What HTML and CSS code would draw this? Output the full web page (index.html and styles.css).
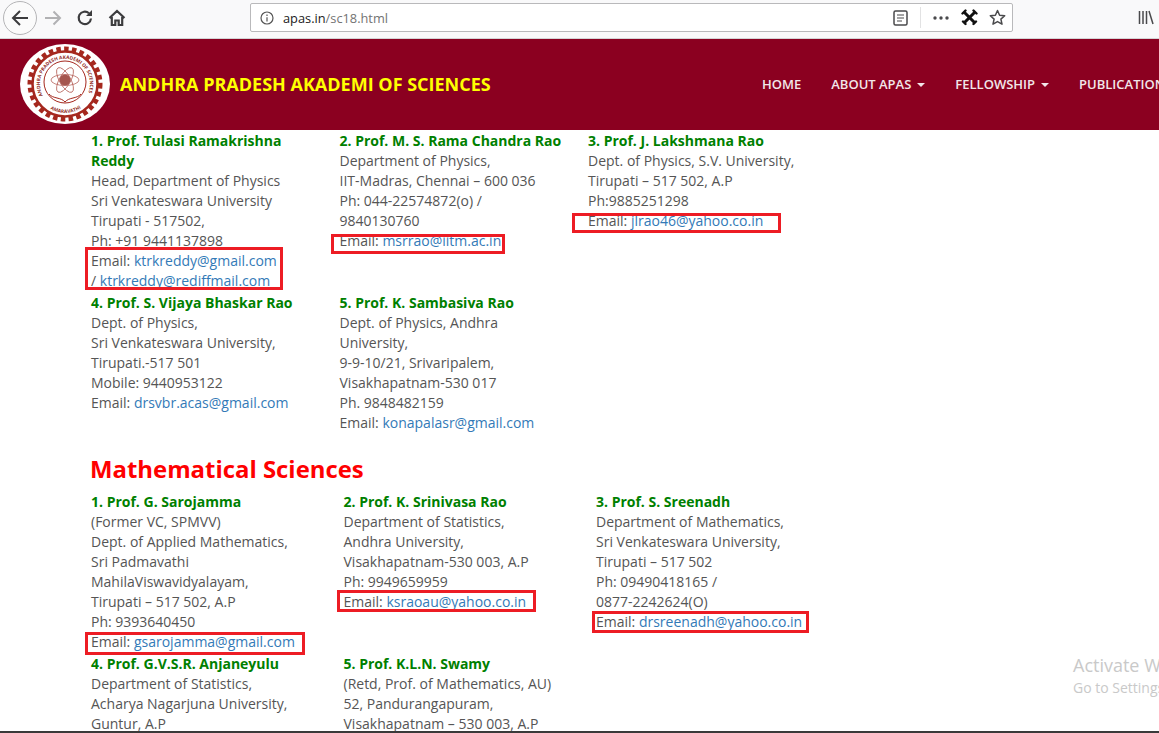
FILE: index.html
```html
<!DOCTYPE html>
<html lang="en">
<head>
<meta charset="utf-8">
<title>Andhra Pradesh Akademi of Sciences</title>
<link rel="stylesheet" href="styles.css">
</head>
<body>
<div class="screen">
  <div class="toolbar">
    <div class="tb-nav">
      <span class="back-btn">
        <svg width="20" height="20" viewBox="0 0 20 20" fill="none" stroke="#3c3c3e" stroke-width="2"><path d="M3 10H18M10 3L3 10L10 17"/></svg>
      </span>
      <svg class="forward" width="18" height="18" viewBox="0 0 18 18" fill="none" stroke="#b1b1b3" stroke-width="2"><path d="M1 9H16M9.500 2.500L16 9L9.500 15.500"/></svg>
      <svg class="reload" width="18" height="18" viewBox="0 0 18 18" fill="none" stroke="#3c3c3e" stroke-width="2.200"><path d="M15 9.500A6.200 6.200 0 1 1 13 4.300"/><path d="M16 1V7H10" fill="#3c3c3e" stroke="none"/></svg>
      <svg class="home" width="18" height="18" viewBox="0 0 18 18" fill="none" stroke="#3c3c3e" stroke-width="2.200"><path d="M1.500 9L9 2L16.500 9M3.800 8V16H7.300V11.500H10.700V16H14.200V8"/></svg>
    </div>
    <div class="urlbar">
      <svg class="info" width="14" height="14" viewBox="0 0 14 14" fill="none" stroke="#555" stroke-width="1.200"><circle cx="7" cy="7" r="6"/><path d="M7 6.200V10.500M7 3.500V5"/></svg>
      <span class="url"><span class="host">apas.in</span>/sc18.html</span>
      <svg class="reader" width="15" height="16" viewBox="0 0 15 16" fill="none" stroke="#4a4a4c" stroke-width="1.500"><rect x="1" y="1" width="13" height="14" rx="1.500"/><path d="M4 5H11M4 8H11M4 11H9" stroke-width="1.200"/></svg>
      <span class="sep"></span>
      <svg class="dots" width="16" height="4" viewBox="0 0 16 4" fill="#4a4a4c"><circle cx="2" cy="2" r="1.700"/><circle cx="8" cy="2" r="1.700"/><circle cx="14" cy="2" r="1.700"/></svg>
      <svg class="tools" width="17" height="17" viewBox="0 0 17 17" fill="none" stroke="#111" stroke-linecap="round"><path d="M4 4L13 13" stroke-width="3"/><path d="M13 4L4 13" stroke-width="3"/><path d="M1.500 4.500L4.500 1.500M12.500 1.500L15.500 4.500M2 12.500L4.500 15M12.500 15L15 12.500" stroke-width="2.400"/></svg>
      <svg class="star" width="17" height="17" viewBox="0 0 17 17" fill="none" stroke="#4a4a4c" stroke-width="1.500" stroke-linejoin="round"><path d="M8.500 1.500L10.600 6.200L15.700 6.700L11.900 10.100L13 15.200L8.500 12.600L4 15.200L5.100 10.100L1.300 6.700L6.400 6.200Z"/></svg>
    </div>
    <svg class="library" width="16" height="15" viewBox="0 0 16 15" fill="none" stroke="#4a4a4c" stroke-width="1.500"><path d="M1.500 1V14M5 1V14M8.500 1V14M11 1L15 14"/></svg>
  </div>

  <header class="site-header">
    <svg class="logo" width="90" height="80" viewBox="0 0 90 80">
      <defs>
        <path id="arc-top" d="M23.400 52.500A25 25 0 1 1 66.600 52.500"/>
        <path id="arc-bottom" d="M26.400 62.200A29 29 0 0 0 63.600 62.200"/>
      </defs>
      <ellipse cx="45" cy="40" rx="45" ry="40" fill="#fff"/>
      <circle cx="45" cy="40" r="35" fill="none" stroke="#a5281e" stroke-width="5" stroke-dasharray="4.500 3.300"/>
      <circle cx="45" cy="40" r="32.500" fill="none" stroke="#a5281e" stroke-width="2.500"/>
      <text class="logo-text"><textPath href="#arc-top" startOffset="1%">ANDHRA PRADESH AKADEMI OF SCIENCES</textPath></text>
      <text class="logo-text"><textPath href="#arc-bottom" startOffset="12%">AMARAVATHI</textPath></text>
      <circle cx="45" cy="38" r="21" fill="none" stroke="#a5281e" stroke-width="1"/>
      <g fill="none" stroke="#b8665e" stroke-width=".8">
        <ellipse cx="45" cy="36" rx="14" ry="5.500"/>
        <ellipse cx="45" cy="36" rx="14" ry="5.500" transform="rotate(60 45 36)"/>
        <ellipse cx="45" cy="36" rx="14" ry="5.500" transform="rotate(120 45 36)"/>
      </g>
      <circle cx="45" cy="36" r="5.500" fill="#a5564e"/>
      <path d="M29 50C33 55 41 53 45 58C49 53 57 55 61 50" fill="none" stroke="#a5281e" stroke-width="1"/>
    </svg>
    <h1 class="brand">ANDHRA PRADESH AKADEMI OF SCIENCES</h1>
    <nav class="site-nav">
      <a>HOME</a>
      <a>ABOUT APAS<i class="caret"></i></a>
      <a>FELLOWSHIP<i class="caret"></i></a>
      <a>PUBLICATIONS<i class="caret"></i></a>
    </nav>
  </header>

  <main class="content">
    <section class="people first">
      <div class="person">
        <b>1. Prof. Tulasi Ramakrishna Reddy</b>
        Head, Department of Physics<br>Sri Venkateswara University<br>Tirupati - 517502,<br>Ph: +91 9441137898<br>
        Email: <a>ktrkreddy@gmail.com</a><br>/ <a>ktrkreddy@rediffmail.com</a>
      </div>
      <div class="person">
        <b>2. Prof. M. S. Rama Chandra Rao</b>
        Department of Physics,<br>IIT-Madras, Chennai – 600 036<br>Ph: 044-22574872(o) /<br>9840130760<br>
        Email: <a>msrrao@iitm.ac.in</a>
      </div>
      <div class="person">
        <b>3. Prof. J. Lakshmana Rao</b>
        Dept. of Physics, S.V. University,<br>Tirupati – 517 502, A.P<br>Ph:9885251298<br>
        Email: <a>jlrao46@yahoo.co.in</a>
      </div>
      <div class="person">
        <b>4. Prof. S. Vijaya Bhaskar Rao</b>
        Dept. of Physics,<br>Sri Venkateswara University,<br>Tirupati.-517 501<br>Mobile: 9440953122<br>
        Email: <a>drsvbr.acas@gmail.com</a>
      </div>
      <div class="person">
        <b>5. Prof. K. Sambasiva Rao</b>
        Dept. of Physics, Andhra<br>University,<br>9-9-10/21, Srivaripalem,<br>Visakhapatnam-530 017<br>Ph. 9848482159<br>
        Email: <a>konapalasr@gmail.com</a>
      </div>
    </section>

    <h2 class="section-title">Mathematical Sciences</h2>

    <section class="people second">
      <div class="person">
        <b>1. Prof. G. Sarojamma</b>
        (Former VC, SPMVV)<br>Dept. of Applied Mathematics,<br>Sri Padmavathi<br>MahilaViswavidyalayam,<br>Tirupati – 517 502, A.P<br>Ph: 9393640450<br>
        Email: <a>gsarojamma@gmail.com</a>
      </div>
      <div class="person">
        <b>2. Prof. K. Srinivasa Rao</b>
        Department of Statistics,<br>Andhra University,<br>Visakhapatnam-530 003, A.P<br>Ph: 9949659959<br>
        Email: <a>ksraoau@yahoo.co.in</a>
      </div>
      <div class="person">
        <b>3. Prof. S. Sreenadh</b>
        Department of Mathematics,<br>Sri Venkateswara University,<br>Tirupati – 517 502<br>Ph: 09490418165 /<br>0877-2242624(O)<br>
        Email: <a>drsreenadh@yahoo.co.in</a>
      </div>
      <div class="person">
        <b>4. Prof. G.V.S.R. Anjaneyulu</b>
        Department of Statistics,<br>Acharya Nagarjuna University,<br>Guntur, A.P
      </div>
      <div class="person">
        <b>5. Prof. K.L.N. Swamy</b>
        (Retd, Prof. of Mathematics, AU)<br>52, Pandurangapuram,<br>Visakhapatnam – 530 003, A.P
      </div>
    </section>

    <span class="mark m1"></span>
    <span class="mark m2"></span>
    <span class="mark m3"></span>
    <span class="mark m4"></span>
    <span class="mark m5"></span>
    <span class="mark m6"></span>
    <div class="watermark">
      <div class="wm-big">Activate Windows</div>
      <div class="wm-small">Go to Settings to activate Windows.</div>
    </div>
  </main>
  <div class="taskbar-edge"></div>
</div>
</body>
</html>
```

FILE: styles.css
```css
* { box-sizing: border-box; }
html, body { margin: 0; padding: 0; overflow: hidden; background: #fff; }
.screen {
  width: 1159px;
  height: 733px;
  display: flex;
  flex-direction: column;
  overflow: hidden;
  font-family: "Open Sans", sans-serif;
  font-size: 14px;
  line-height: 20px;
  color: #555;
}

/* browser chrome */
.toolbar {
  height: 39px;
  flex: none;
  display: flex;
  align-items: center;
  background: #f9f9fa;
  border-bottom: 1px solid #d4d4d6;
  padding-bottom: 3px;
}
.tb-nav { width: 250px; flex: none; display: flex; align-items: center; padding-left: 3px; }
.back-btn {
  width: 34px;
  height: 34px;
  flex: none;
  display: flex;
  align-items: center;
  justify-content: center;
  border: 1px solid #b5b5b7;
  border-radius: 50%;
  background: #fbfbfb;
}
.forward { margin-left: 7px; }
.reload { margin-left: 14px; }
.home { margin-left: 14px; }
.urlbar {
  width: 763px;
  height: 29px;
  flex: none;
  display: flex;
  align-items: center;
  background: #fff;
  border: 1px solid #b9b9bb;
  border-radius: 2px;
  padding-left: 9px;
}
.url { margin-left: 9px; font-size: 12.800px; color: #737373; flex: 1; }
.host { color: #1a1a1a; }
.sep { width: 1px; height: 21px; background: #e2e2e3; margin-left: 12px; }
.dots { margin-left: 12px; }
.tools { margin-left: 12px; }
.star { margin-left: 11px; margin-right: 6px; }
.library { margin-left: 125px; flex: none; }

/* site header */
.site-header {
  height: 91px;
  flex: none;
  display: flex;
  align-items: center;
  background: #8b0020;
  padding-left: 20px;
  white-space: nowrap;
  overflow: hidden;
}
.logo { flex: none; margin-top: -1px; }
.logo-text { font-size: 4.800px; font-weight: 700; fill: #8f2a22; }
.brand {
  margin: -2px 0 0 10px;
  font-size: 18px;
  line-height: 20px;
  font-weight: 700;
  color: #ff0;
  width: 642px;
  flex: none;
}
.site-nav { display: flex; gap: 30px; flex: none; margin-top: -2px; font-size: 13px; font-weight: 600; color: #f2e6e9; }
.caret {
  display: inline-block;
  width: 0;
  height: 0;
  margin-left: 6px;
  vertical-align: middle;
  border-top: 4px solid #f2e6e9;
  border-left: 4px solid transparent;
  border-right: 4px solid transparent;
}

/* content */
.content { position: relative; flex: 1; overflow: hidden; padding: 1px 0 0 91px; }
.people { display: grid; row-gap: 2px; }
.first { grid-template-columns: repeat(3, 248.500px); width: 746px; }
.second { grid-template-columns: repeat(3, 252.500px); width: 758px; }
.person b { display: block; color: #008000; font-weight: 700; padding-right: 20px; }
.person a { color: #337ab7; }
.section-title {
  margin: 19px 0 7px -1px;
  font-size: 23.900px;
  line-height: 33px;
  font-weight: 700;
  color: #f00;
}

/* annotation rectangles drawn over the screenshot */
.mark { position: absolute; border: 3px solid #ed1c24; }
.m1 { left: 85px; top: 117px; width: 198px; height: 43px; }
.m2 { left: 331px; top: 104px; width: 174px; height: 20px; }
.m3 { left: 572px; top: 83px; width: 209px; height: 20px; }
.m4 { left: 337px; top: 460px; width: 199px; height: 22px; }
.m5 { left: 85px; top: 502px; width: 220px; height: 23px; }
.m6 { left: 592px; top: 481px; width: 217px; height: 22px; }

.watermark { position: absolute; left: 1073px; top: 523px; width: 320px; color: #c9c9c9; }
.wm-big { font-size: 18px; line-height: 25px; }
.wm-small { font-size: 14px; line-height: 20px; }

.taskbar-edge { height: 2px; flex: none; background: #3a3a3a; }
```
